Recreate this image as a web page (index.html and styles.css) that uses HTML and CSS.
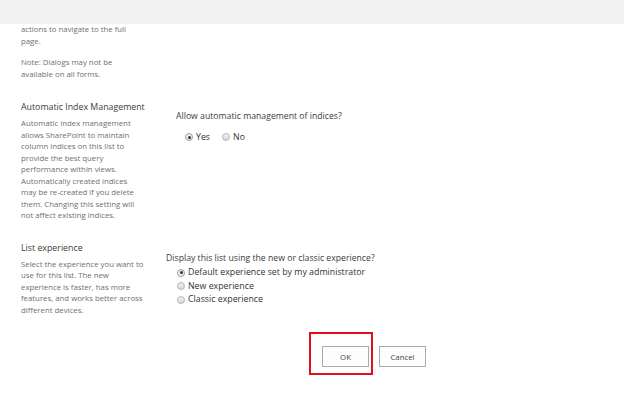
FILE: index.html
```html
<!DOCTYPE html>
<html>
<head>
<meta charset="utf-8">
<link rel="stylesheet" href="styles.css">
</head>
<body>
<div class="topbar"></div>
<div class="form">
  <section class="row row-first">
    <div class="label">
      <p class="desc">actions to navigate to the full<br>page.</p>
      <p class="desc note">Note: Dialogs may not be<br>available on all forms.</p>
    </div>
    <div class="control"></div>
  </section>

  <section class="row row-index">
    <div class="label">
      <h3 class="heading">Automatic Index Management</h3>
      <p class="desc">Automatic index management<br>allows SharePoint to maintain<br>column indices on this list to<br>provide the best query<br>performance within views.<br>Automatically created indices<br>may be re-created if you delete<br>them. Changing this setting will<br>not affect existing indices.</p>
    </div>
    <div class="control control-index">
      <div class="question">Allow automatic management of indices?</div>
      <div class="radios radios-inline">
        <label class="radio"><span class="dot checked"></span>Yes</label>
        <label class="radio"><span class="dot"></span>No</label>
      </div>
    </div>
  </section>

  <section class="row row-exp">
    <div class="label">
      <h3 class="heading">List experience</h3>
      <p class="desc">Select the experience you want to<br>use for this list. The new<br>experience is faster, has more<br>features, and works better across<br>different devices.</p>
    </div>
    <div class="control control-exp">
      <div class="question">Display this list using the new or classic experience?</div>
      <div class="radios radios-stacked">
        <label class="radio"><span class="dot checked"></span>Default experience set by my administrator</label>
        <label class="radio"><span class="dot"></span>New experience</label>
        <label class="radio"><span class="dot"></span>Classic experience</label>
      </div>
    </div>
  </section>

  <div class="buttons">
    <div class="btn-wrap">
      <button class="btn">OK</button>
      <span class="highlight"></span>
    </div>
    <button class="btn">Cancel</button>
  </div>
</div>
</body>
</html>
```
FILE: styles.css
```css
html, body {
  margin: 0;
  padding: 0;
  background: #ffffff;
}
body {
  font-family: "Open Sans", "Noto Sans", sans-serif;
  color: #444444;
  width: 624px;
  height: 403px;
  overflow: hidden;
}
.topbar {
  height: 24px;
  background: #f2f2f2;
}
.form {
  padding-left: 21px;
}
.row {
  display: grid;
  grid-template-columns: 145px 1fr;
}
.label p, .label h3 {
  margin: 0;
}
.desc {
  font-size: 7.8px;
  line-height: 11.5px;
  color: #6f6f6f;
  white-space: nowrap;
}
.note {
  margin-top: 10px !important;
}
.heading {
  font-size: 8.8px;
  font-weight: normal;
  line-height: 13px;
  color: #3c3c3c;
  white-space: nowrap;
}
.heading + .desc {
  margin-top: 4px !important;
}
.row-index {
  margin-top: 21px;
}
.row-exp {
  margin-top: 20px;
}
.question {
  font-size: 8.7px;
  line-height: 13px;
  color: #3c3c3c;
  white-space: nowrap;
}
.control-index {
  padding-top: 9px;
  padding-left: 10px;
}
.control-exp {
  padding-top: 10px;
}
.radios-inline {
  display: flex;
  gap: 12px;
  margin-top: 8px;
  padding-left: 9px;
}
.radios-stacked {
  display: flex;
  flex-direction: column;
  margin-top: 1.5px;
  padding-left: 11px;
}
.radio {
  display: flex;
  align-items: center;
  font-size: 8.8px;
  line-height: 13.5px;
  height: 13.5px;
  color: #333333;
  white-space: nowrap;
}
.radios-inline .radio {
  line-height: 12px;
  height: 12px;
}
.dot {
  box-sizing: border-box;
  width: 8px;
  height: 8px;
  border-radius: 50%;
  border: 1px solid #b5b5b5;
  background: linear-gradient(#f2f2f2, #d8d8d8);
  margin-right: 3px;
  position: relative;
  flex: none;
}
.dot.checked {
  background: #f0f0f0;
  border-color: #9c9c9c;
}
.dot.checked::after {
  content: "";
  position: absolute;
  left: 1.5px;
  top: 1.5px;
  width: 3px;
  height: 3px;
  border-radius: 50%;
  background: #333333;
}
.buttons {
  display: flex;
  gap: 10px;
  margin-top: 30px;
  padding-left: 301px;
}
.btn-wrap {
  position: relative;
  display: flex;
}
.btn {
  box-sizing: border-box;
  width: 47px;
  height: 21px;
  border: 1px solid #ababab;
  background: #fdfdfd;
  font-family: "Open Sans", "Noto Sans", sans-serif;
  font-size: 7.8px;
  color: #444444;
  padding: 0;
}
.highlight {
  position: absolute;
  left: -13px;
  top: -14px;
  width: 64px;
  height: 43px;
  box-sizing: border-box;
  border: 2px solid #e0101e;
}
```
